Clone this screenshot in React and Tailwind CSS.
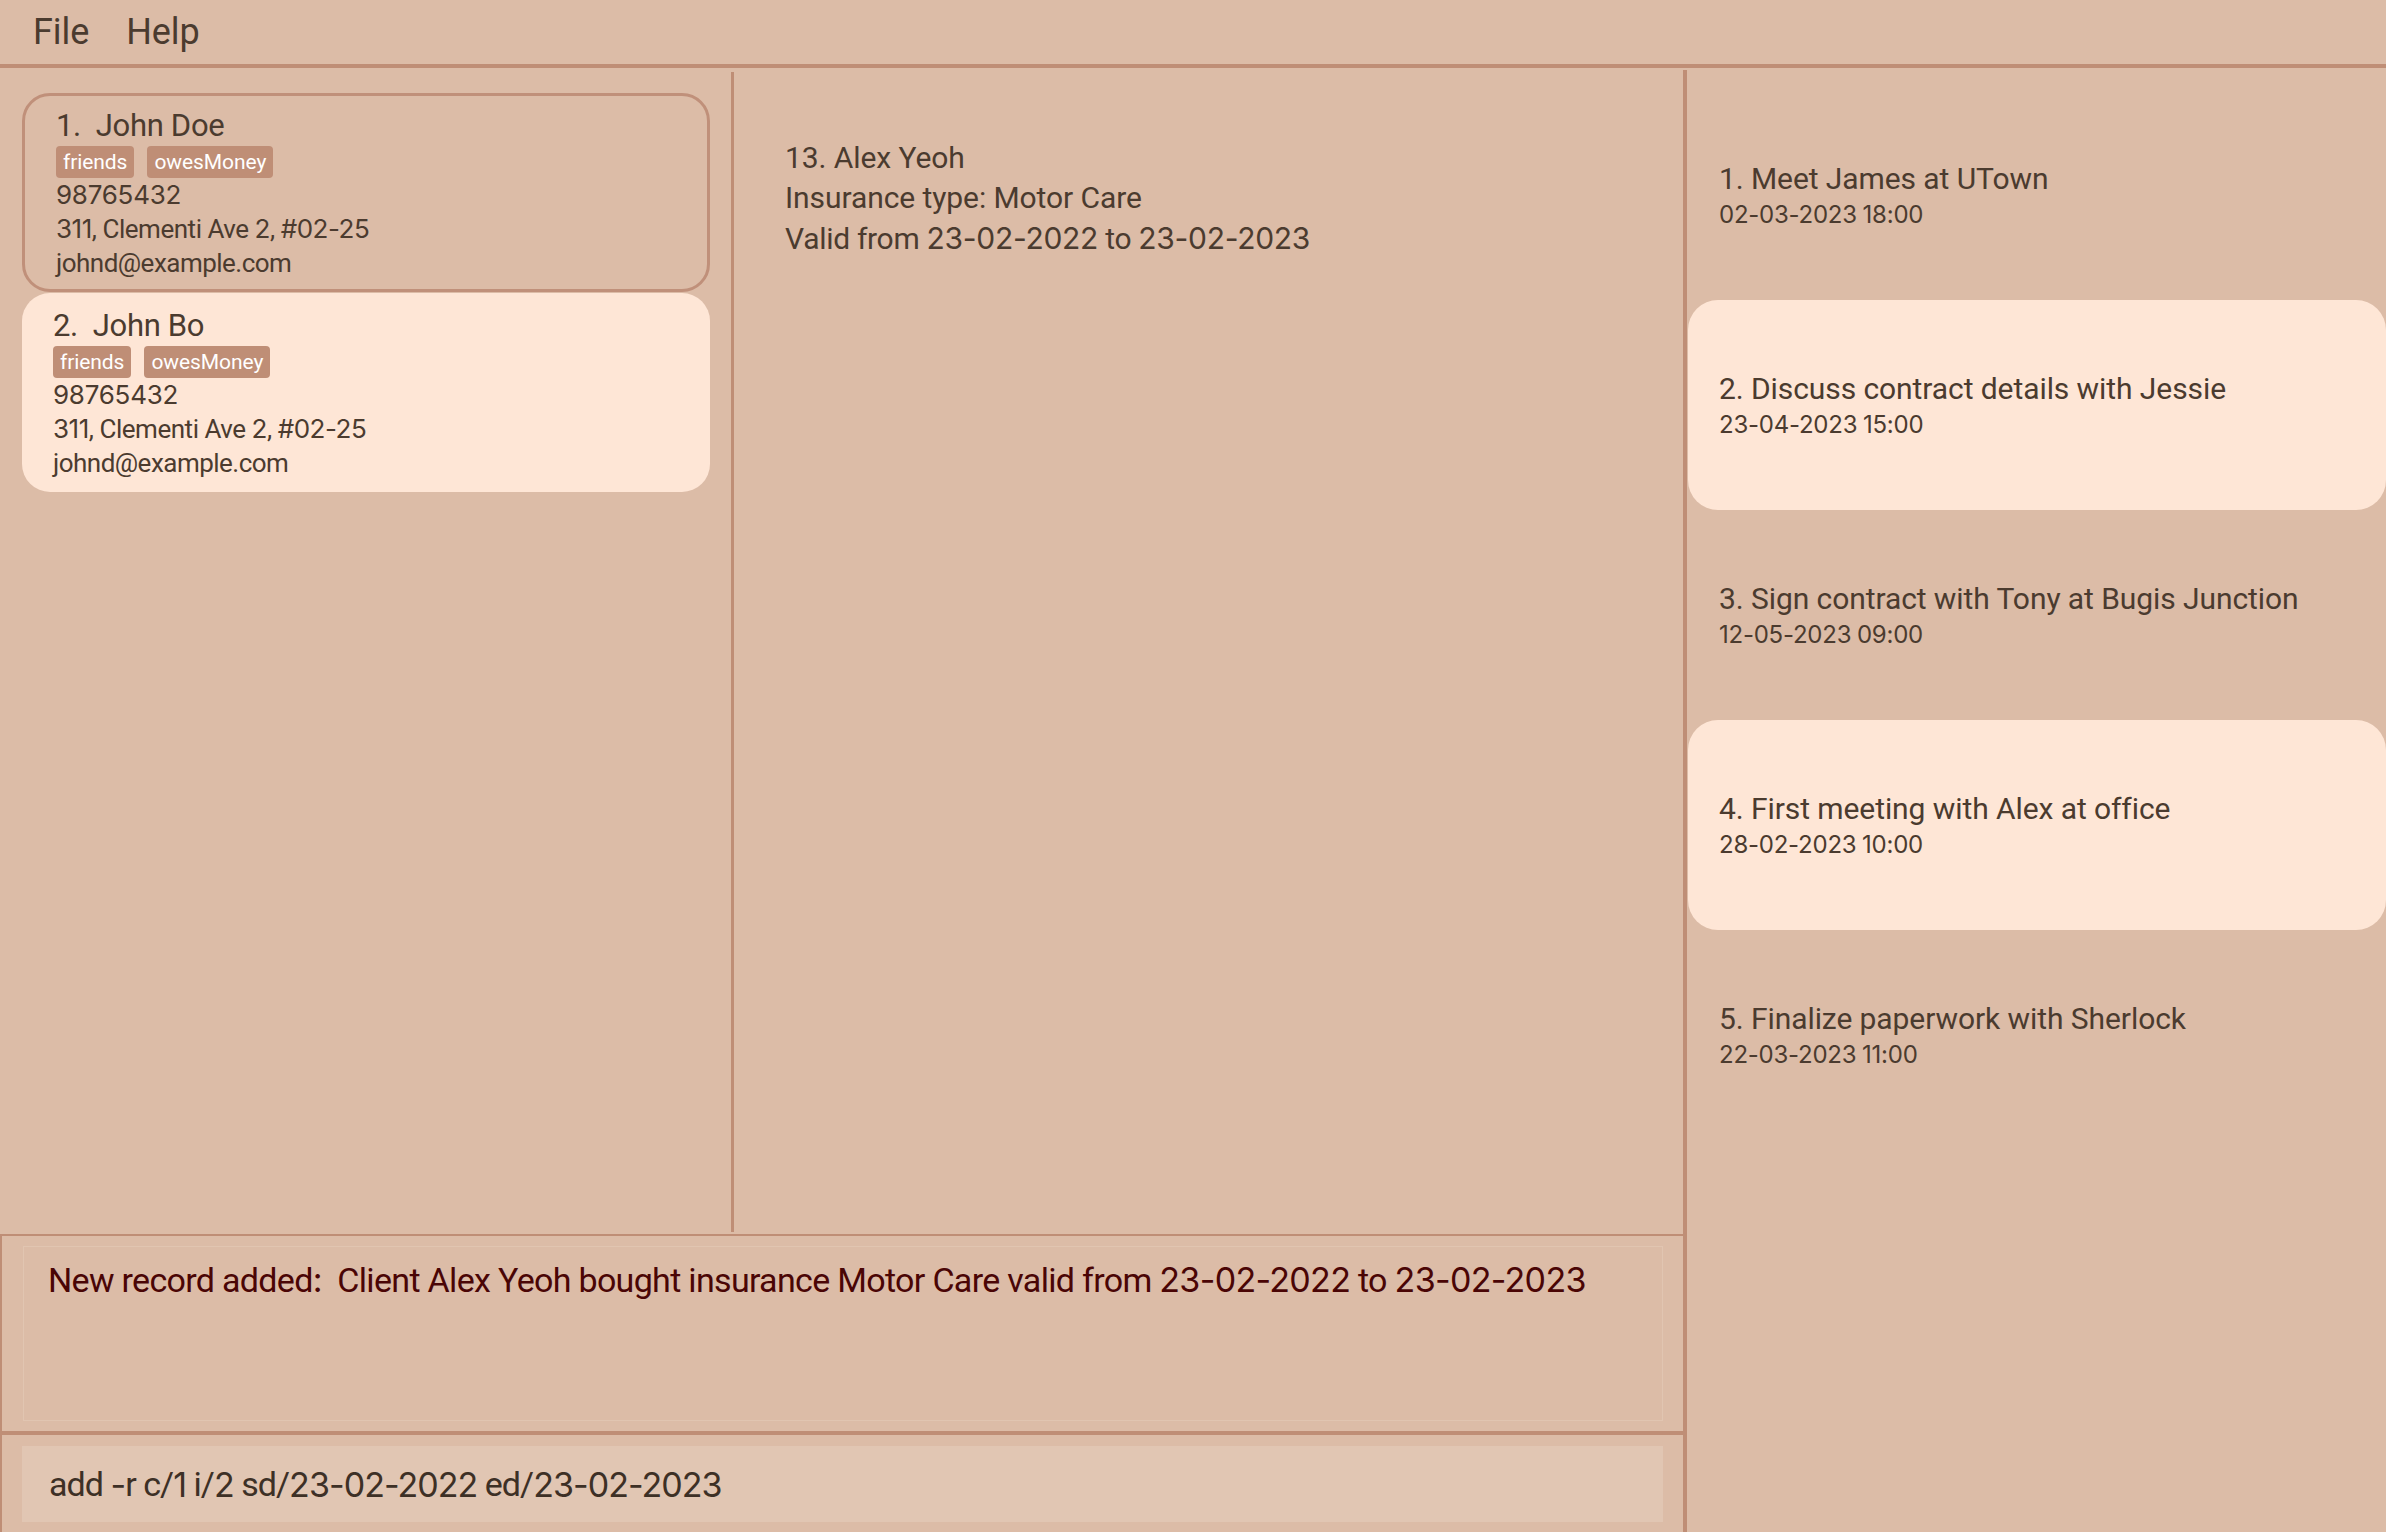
import React from "react";

function T({ children }) {
  const parts = String(children).split(/([0-9\-:#]+)/);
  return (
    <>
      {parts.map((s, i) =>
        /[0-9\-:#]/.test(s) ? (
          <span key={i} className="font-['Inter',sans-serif]">{s}</span>
        ) : (
          <React.Fragment key={i}>{s}</React.Fragment>
        )
      )}
    </>
  );
}

const persons = [
  { idx: 1, name: "John Doe", selected: true },
  { idx: 2, name: "John Bo", selected: false },
];

const meetings = [
  { t: "1. Meet James at UTown", d: "02-03-2023 18:00", hl: false },
  { t: "2. Discuss contract details with Jessie", d: "23-04-2023 15:00", hl: true },
  { t: "3. Sign contract with Tony at Bugis Junction", d: "12-05-2023 09:00", hl: false },
  { t: "4. First meeting with Alex at office", d: "28-02-2023 10:00", hl: true },
  { t: "5. Finalize paperwork with Sherlock", d: "22-03-2023 11:00", hl: false },
];

function PersonCard({ p }) {
  const base = p.selected
    ? "border-[3px] border-[#c0907a] bg-[#dcbca7] pl-[31px]"
    : "bg-[#fee6d6] pl-[28px] border-[3px] border-transparent";
  return (
    <div className={`rounded-[28px] pt-[12px] pb-[9px] ${base}`}>
      <div className="text-[31px] leading-[36px] whitespace-pre tracking-[-0.01em]">{`${p.idx}.  ${p.name}`}</div>
      <div className="flex gap-[13px] mt-[2px]">
        <span className="h-[32px] px-[7px] rounded-[4px] bg-[#bf8e76] text-white text-[21px] leading-[32px]">friends</span>
        <span className="h-[32px] px-[7px] rounded-[4px] bg-[#bf8e76] text-white text-[21px] leading-[32px]">owesMoney</span>
      </div>
      <div className="text-[26px] leading-[34px] tracking-[-0.01em]"><T>98765432</T></div>
      <div className="text-[26px] leading-[34px] tracking-[-0.018em]"><T>311, Clementi Ave 2, #02-25</T></div>
      <div className="text-[26px] leading-[34px] tracking-[-0.02em]">johnd@example.com</div>
    </div>
  );
}

export default function App() {
  return (
    <div className="w-[2386px] h-[1532px] bg-[#dcbca7] flex flex-col overflow-hidden text-[#4b3b2f] font-['Roboto',sans-serif] tracking-[-0.005em]">
      {/* menu */}
      <div className="h-[68px] shrink-0 border-b-[4px] border-[#bf8e76] flex items-center pl-[33px] gap-[37px] text-[36px]">
        <span>File</span>
        <span>Help</span>
      </div>

      <div className="flex-1 flex min-h-0">
        {/* left main area */}
        <div className="w-[1683px] flex flex-col">
          <div className="h-[1166px] flex">
            <div className="w-[731px] pt-[25px] pl-[22px] pr-[21px] flex flex-col gap-[1px]">
              {persons.map((p) => (
                <PersonCard key={p.idx} p={p} />
              ))}
            </div>
            <div className="w-[3px] bg-[#bf8e76] mt-[4px] mb-[2px]" />
            <div className="flex-1 pl-[51px] pt-[70px] text-[30px] leading-[40px]">
              <div>13. Alex Yeoh</div>
              <div>Insurance type: Motor Care</div>
              <div className="tracking-[-0.01em]"><T>Valid from 23-02-2022 to 23-02-2023</T></div>
            </div>
          </div>

          {/* result box */}
          <div className="h-[197px] border-t-[2px] border-l-[2px] border-[#bf8e76] pl-[21px] pr-[20px] pt-[10px] pb-[10px]">
            <div className="h-full border border-[#e1c5b1] pl-[24px] pt-[12px] text-[34px] leading-[42px] text-[#4a0505] whitespace-pre tracking-[-0.02em]">
              <T>{"New record added:  Client Alex Yeoh bought insurance Motor Care valid from 23-02-2022 to 23-02-2023"}</T>
            </div>
          </div>
          <div className="h-[4px] bg-[#bf8e76]" />
          {/* command box */}
          <div className="flex-1 border-l-[2px] border-[#bf8e76] pl-[20px] pr-[20px] pt-[11px] pb-[10px]">
            <div className="h-[76px] bg-[#e1c6b3] flex items-center pl-[27px] text-[34px] text-[#3d3026] whitespace-pre tracking-[-0.028em]">
              <T>add -r c/1 i/2 sd/23-02-2022 ed/23-02-2023</T>
            </div>
          </div>
        </div>

        {/* divider */}
        <div className="w-[4px] bg-[#bf8e76] mt-[2px]" />

        {/* right panel */}
        <div className="flex-1 pt-[22px] pl-[1px]">
          {meetings.map((m, i) => (
            <div
              key={i}
              className={`h-[210px] flex flex-col justify-center pl-[31px] rounded-[30px] ${m.hl ? "bg-[#fee6d6]" : ""}`}
            >
              <div className="text-[30px] leading-[36px]">{m.t}</div>
              <div className="text-[24px] leading-[30px] mt-[3px] tracking-[-0.01em]"><T>{m.d}</T></div>
            </div>
          ))}
        </div>
      </div>
    </div>
  );
}
